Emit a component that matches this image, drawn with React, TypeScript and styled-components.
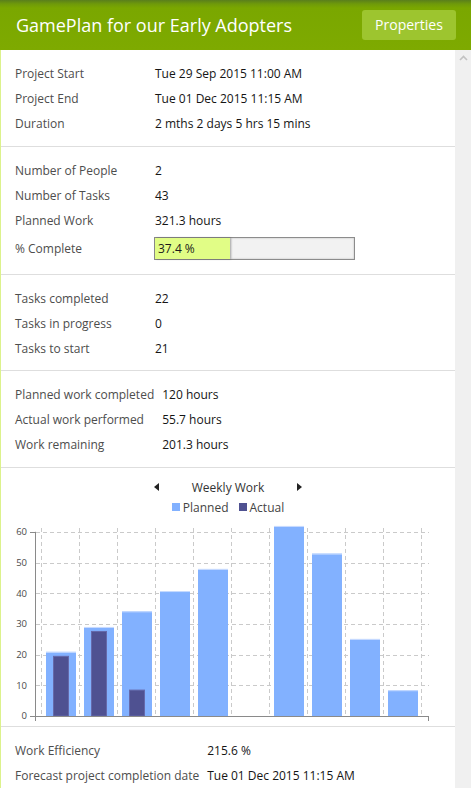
import React from "react";
import styled, { createGlobalStyle } from "styled-components";

const GlobalStyle = createGlobalStyle`
  html, body { margin: 0; padding: 0; background: #fff; }
  body { font-family: "Open Sans", "DejaVu Sans", sans-serif; }
  * { box-sizing: border-box; }
`;

const Page = styled.div`
  width: 471px;
  height: 788px;
  display: flex;
  flex-direction: column;
  overflow: hidden;
`;

const Header = styled.header`
  height: 50px;
  flex: 0 0 50px;
  display: flex;
  align-items: center;
  justify-content: space-between;
  padding: 0 15px 0 16px;
  background: linear-gradient(#5a7f1c 0px, #6f9a0a 4px, #7aa700 8px, #7eaa00 100%);
`;

const Title = styled.h1`
  margin: 0;
  font-size: 18px;
  font-weight: 400;
  color: #fff;
  letter-spacing: 0;
  padding-bottom: 1px;
`;

const HeaderButton = styled.button`
  width: 94px;
  height: 30px;
  border: 0;
  border-radius: 3px;
  background: #9dc52f;
  color: #fff;
  font-family: inherit;
  font-size: 14px;
  padding: 0 0 1px;
`;

const Body = styled.div`
  flex: 1;
  display: flex;
  min-height: 0;
`;

const Content = styled.main`
  flex: 1;
  border-left: 1px solid #dcf28c;
  background: #fff;
  display: flex;
  flex-direction: column;
`;

const ScrollTrack = styled.div`
  width: 16px;
  flex: 0 0 16px;
  background: #f0f0f0;
  display: flex;
  justify-content: center;
  padding-top: 5px;
`;

const Section = styled.section<{ $first?: boolean; $tight?: boolean }>`
  padding: 11px 0 ${(p) => (p.$tight ? "9px" : "10px")} 14px;
  border-top: ${(p) => (p.$first ? "0" : "1px solid #dedede")};
`;

const InfoGrid = styled.div`
  display: grid;
  grid-template-columns: auto 1fr;
  font-size: 12px;
`;

const Label = styled.div<{ $tall?: boolean }>`
  min-width: 140px;
  padding-right: 8px;
  height: ${(p) => (p.$tall ? "31px" : "25px")};
  display: flex;
  align-items: center;
  color: #4d4d4d;
  white-space: nowrap;
`;

const Value = styled.div<{ $tall?: boolean }>`
  height: ${(p) => (p.$tall ? "31px" : "25px")};
  display: flex;
  align-items: center;
  color: #151515;
  white-space: nowrap;
`;

const Progress = styled.div`
  width: 201px;
  height: 23px;
  margin: -1px 0 0 -1px;
  border: 1px solid #8c8c8c;
  background: #f2f2f2;
  box-shadow: inset 0 0 2px rgba(0, 0, 0, 0.25);
  display: flex;
`;

const ProgressFill = styled.div`
  height: 100%;
  background: #e1fd86;
  box-shadow: 1px 0 2px rgba(0, 0, 0, 0.35);
  display: flex;
  align-items: center;
  padding-left: 3px;
  color: #1a1a1a;
  font-size: 12px;
`;

const ChartSection = styled.section`
  border-top: 1px solid #dedede;
  padding-top: 9px;
  display: flex;
  flex-direction: column;
  align-items: stretch;
`;

const ChartNav = styled.div`
  height: 20px;
  display: flex;
  align-items: center;
  justify-content: center;
  gap: 33px;
  font-size: 12px;
  color: #333;
`;

const Arrow = styled.span<{ $dir: "left" | "right" }>`
  width: 0;
  height: 0;
  border-top: 4.5px solid transparent;
  border-bottom: 4.5px solid transparent;
  ${(p) =>
    p.$dir === "left"
      ? "border-right: 5px solid #222;"
      : "border-left: 5px solid #222;"}
`;

const Legend = styled.div`
  height: 20px;
  display: flex;
  align-items: center;
  justify-content: center;
  gap: 10px;
  font-size: 12px;
  color: #444;
`;

const LegendItem = styled.span`
  display: flex;
  align-items: center;
  gap: 3px;
`;

const Swatch = styled.span<{ $color: string }>`
  width: 8px;
  height: 8px;
  background: ${(p) => p.$color};
`;

const ChartSvg = styled.svg`
  display: block;
  font-family: "Open Sans", sans-serif;
`;

const planned = [20.9, 29, 34.1, 40.7, 47.9, 0, 61.9, 52.9, 25.1, 8.4];
const actual = [19.6, 27.7, 8.6, 0, 0, 0, 0, 0, 0, 0];

const PLANNED = "#82b1ff";
const ACTUAL = "#4f5191";

function WeeklyChart() {
  const base = 199;
  const k = 3.07;
  const y = (v: number) => base - v * k;
  const ticks = [0, 10, 20, 30, 40, 50, 60];
  return (
    <ChartSvg width={454} height={209} viewBox="0 0 454 209">
      {ticks.slice(1).map((t) => (
        <line
          key={"h" + t}
          x1={35}
          x2={428}
          y1={Math.round(y(t)) + 0.5}
          y2={Math.round(y(t)) + 0.5}
          stroke="#cacaca"
          strokeDasharray="4 3"
        />
      ))}
      {Array.from({ length: 11 }).map((_, i) => (
        <line
          key={"v" + i}
          x1={40.5 + 38 * i}
          x2={40.5 + 38 * i}
          y1={11}
          y2={199}
          stroke="#cacaca"
          strokeDasharray="4 3"
        />
      ))}
      {planned.map((v, i) =>
        v > 0 ? (
          <g key={"p" + i}>
            <rect x={45 + 38 * i} y={y(v)} width={30} height={base - y(v)} fill={PLANNED} />
            <rect x={45 + 38 * i} y={y(v)} width={30} height={1} fill="#c9dcff" />
          </g>
        ) : null
      )}
      {actual.map((v, i) =>
        v > 0 ? (
          <rect
            key={"a" + i}
            x={52.5 + 38 * i}
            y={y(v) + 0.5}
            width={15}
            height={base - y(v) - 0.5}
            fill={ACTUAL}
            stroke="#6569aa"
            strokeWidth={1}
          />
        ) : null
      )}
      <line x1={34.5} x2={34.5} y1={y(60)} y2={204} stroke="#8a8a8a" />
      <line x1={29} x2={34.5} y1={Math.round(y(60)) + 0.5} y2={Math.round(y(60)) + 0.5} stroke="#8a8a8a" />
      <line x1={29} x2={428} y1={199.5} y2={199.5} stroke="#8a8a8a" />
      <line x1={427.5} x2={427.5} y1={199.5} y2={204} stroke="#8a8a8a" />
      {ticks.map((t) => (
        <text
          key={"t" + t}
          x={26}
          y={y(t) + 3.3}
          textAnchor="end"
          fontSize={9.5}
          fill="#4a4a4a"
        >
          {t}
        </text>
      ))}
    </ChartSvg>
  );
}

type Row = { label: string; value: React.ReactNode; tall?: boolean };

function InfoSection({ rows, first, tight }: { rows: Row[]; first?: boolean; tight?: boolean }) {
  return (
    <Section $first={first} $tight={tight}>
      <InfoGrid>
        {rows.map((r) => (
          <React.Fragment key={r.label}>
            <Label $tall={r.tall}>{r.label}</Label>
            <Value $tall={r.tall}>{r.value}</Value>
          </React.Fragment>
        ))}
      </InfoGrid>
    </Section>
  );
}

export default function App() {
  const pct = 37.4;
  return (
    <>
      <GlobalStyle />
      <Page>
        <Header>
          <Title>GamePlan for our Early Adopters</Title>
          <HeaderButton>Properties</HeaderButton>
        </Header>
        <Body>
          <Content>
            <InfoSection
              first
              rows={[
                { label: "Project Start", value: "Tue 29 Sep 2015 11:00 AM" },
                { label: "Project End", value: "Tue 01 Dec 2015 11:15 AM" },
                { label: "Duration", value: "2 mths 2 days 5 hrs 15 mins" },
              ]}
            />
            <InfoSection
              rows={[
                { label: "Number of People", value: "2" },
                { label: "Number of Tasks", value: "43" },
                { label: "Planned Work", value: "321.3 hours" },
                {
                  label: "% Complete",
                  tall: true,
                  value: (
                    <Progress>
                      <ProgressFill style={{ width: `${pct * 2}px` }}>37.4 %</ProgressFill>
                    </Progress>
                  ),
                },
              ]}
            />
            <InfoSection
              tight
              rows={[
                { label: "Tasks completed", value: "22" },
                { label: "Tasks in progress", value: "0" },
                { label: "Tasks to start", value: "21" },
              ]}
            />
            <InfoSection
              rows={[
                { label: "Planned work completed", value: "120 hours" },
                { label: "Actual work performed", value: "55.7 hours" },
                { label: "Work remaining", value: "201.3 hours" },
              ]}
            />
            <ChartSection>
              <ChartNav>
                <Arrow $dir="left" />
                <span>Weekly Work</span>
                <Arrow $dir="right" />
              </ChartNav>
              <Legend>
                <LegendItem>
                  <Swatch $color={PLANNED} />
                  Planned
                </LegendItem>
                <LegendItem>
                  <Swatch $color={ACTUAL} />
                  Actual
                </LegendItem>
              </Legend>
              <WeeklyChart />
            </ChartSection>
            <InfoSection
              rows={[
                { label: "Work Efficiency", value: "215.6 %" },
                { label: "Forecast project completion date", value: "Tue 01 Dec 2015 11:15 AM" },
              ]}
            />
          </Content>
          <ScrollTrack>
            <svg width="9" height="6" viewBox="0 0 9 6">
              <polyline points="1,5 4.5,1.5 8,5" fill="none" stroke="#c2c2c2" strokeWidth="1.6" />
            </svg>
          </ScrollTrack>
        </Body>
      </Page>
    </>
  );
}
